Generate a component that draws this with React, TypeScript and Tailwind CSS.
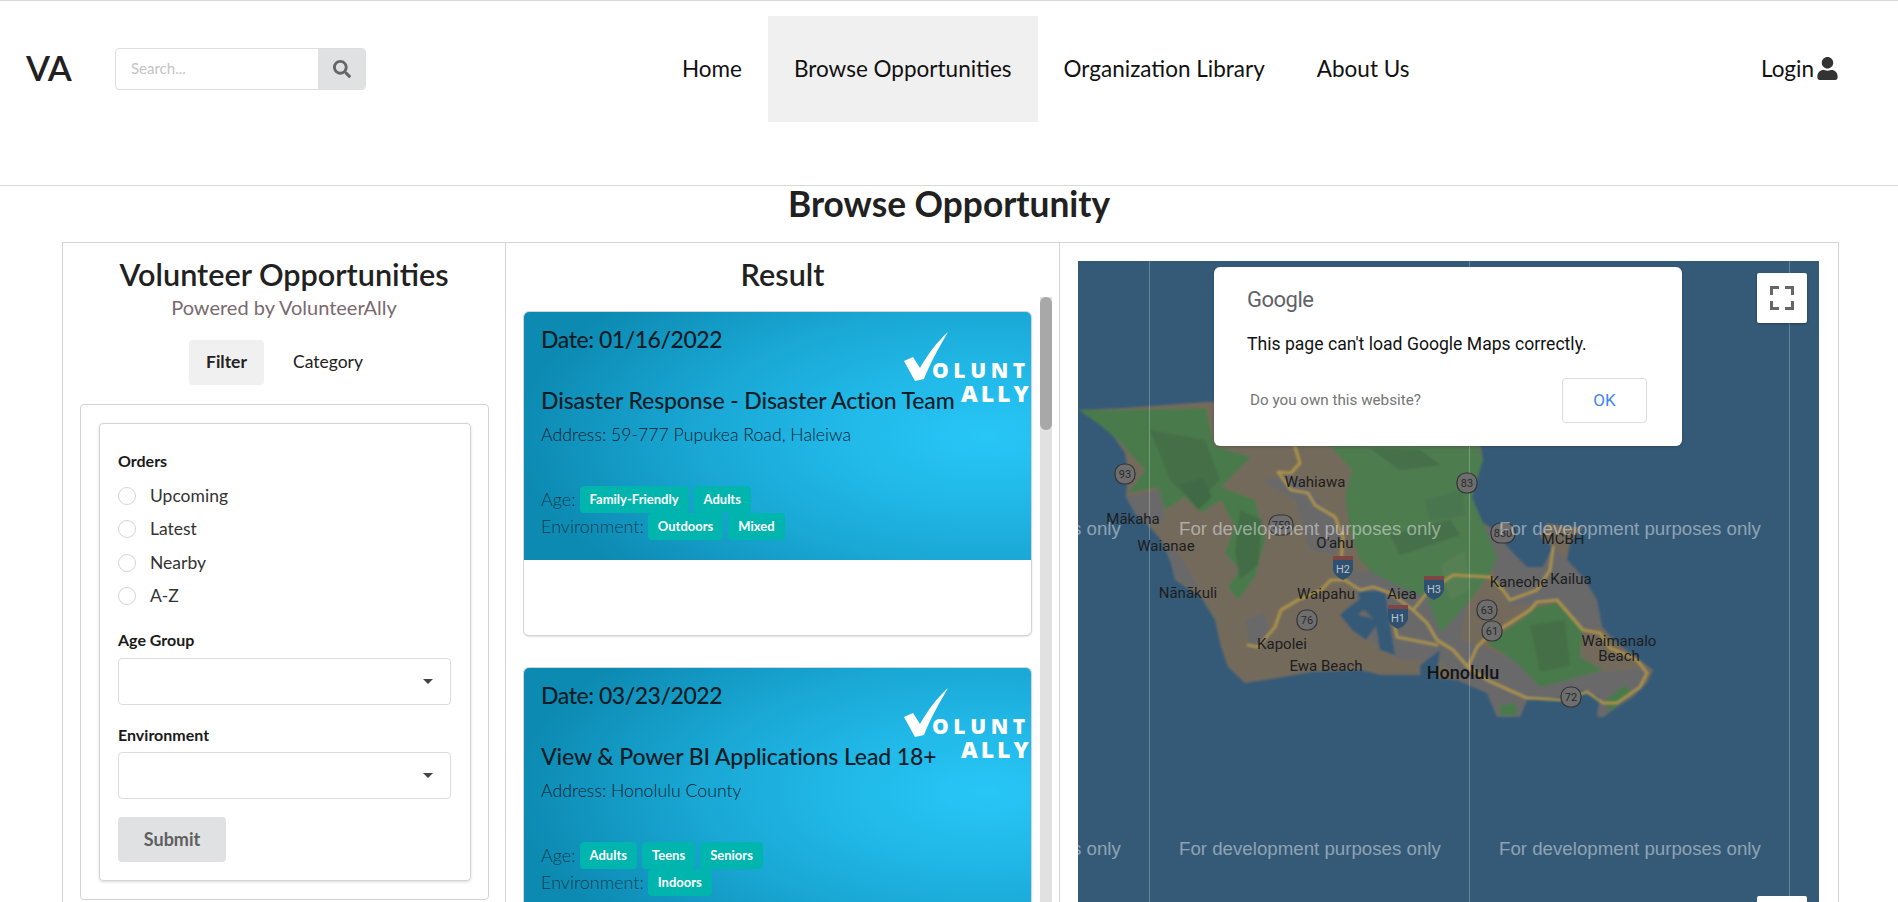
import { FaSearch, FaUser } from "react-icons/fa";

type Opportunity = {
  date: string;
  title: string;
  address: string;
  age: string[];
  environment: string[];
};

const opportunities: Opportunity[] = [
  {
    date: "01/16/2022",
    title: "Disaster Response - Disaster Action Team",
    address: "59-777 Pupukea Road, Haleiwa",
    age: ["Family-Friendly", "Adults"],
    environment: ["Outdoors", "Mixed"],
  },
  {
    date: "03/23/2022",
    title: "View & Power BI Applications Lead 18+",
    address: "Honolulu County",
    age: ["Adults", "Teens", "Seniors"],
    environment: ["Indoors"],
  },
];

const navItems = ["Home", "Browse Opportunities", "Organization Library", "About Us"];
const orders = ["Upcoming", "Latest", "Nearby", "A-Z"];

function Tag({ label }: { label: string }) {
  return (
    <span className="flex h-[27px] items-center rounded-[4px] bg-[#00b5ad] px-[10px] text-[13px] font-bold text-white">
      {label}
    </span>
  );
}

function Logo() {
  return (
    <svg viewBox="0 0 131 72" className="absolute right-0 top-[20px] h-[72px] w-[131px]">
      <path d="M4 29 L13 25 L20 36 C28 22 37 10 48 0 C40 14 30 31 24 47 L15 49 Z" fill="#fff" />
      <text x="32" y="46" fill="#fff" fontSize="21" fontWeight="800" letterSpacing="4.6" fontFamily="Open Sans, sans-serif">
        OLUNT
      </text>
      <text x="61" y="70" fill="#fff" fontSize="23" fontWeight="800" letterSpacing="3" fontFamily="Open Sans, sans-serif">
        ALLY
      </text>
    </svg>
  );
}

function ResultCard({ item }: { item: Opportunity }) {
  return (
    <div className="mb-[31px] h-[325px] w-[509px] shrink-0 overflow-hidden rounded-[6px] border border-[#d4d4d5] bg-white shadow-[0_1px_2px_rgba(0,0,0,0.12)]">
      <div className="relative h-[248px] bg-[radial-gradient(ellipse_470px_210px_at_91%_50%,#27c6f7_0%,#21b9e8_30%,#1aa8d5_60%,#0c8ab2_100%)] pl-[17px] pt-[12px]">
        <Logo />
        <p className="text-[23px] leading-[30px] font-medium tracking-[-0.45px] text-[#0a1c26]">Date: {item.date}</p>
        <p className="relative mt-[31px] text-[23px] leading-[30px] font-medium tracking-[-0.12px] text-[#0a1c26]">{item.title}</p>
        <p className="mt-[8px] text-[17.7px] leading-[24px] font-light text-[#0a2230]">Address: {item.address}</p>
        <div className="mt-[39px] flex items-center gap-[5px] text-[18px] font-light text-black/60">
          <span className="mr-[-1px]">Age:</span>
          {item.age.map((a) => (
            <Tag key={a} label={a} />
          ))}
        </div>
        <div className="flex items-center gap-[5px] text-[18px] font-light text-black/60">
          <span className="mr-[-1px]">Environment:</span>
          {item.environment.map((e) => (
            <Tag key={e} label={e} />
          ))}
        </div>
      </div>
    </div>
  );
}

function SelectBox() {
  return (
    <div className="flex h-[47px] w-[333px] items-center justify-end rounded-[4px] border border-[#dcdcdd] pr-[17px]">
      <svg viewBox="0 0 10 5" className="h-[5px] w-[10px]">
        <path d="M0 0 H10 L5 5 Z" fill="#444" />
      </svg>
    </div>
  );
}

function Shield({ x, y, label, w = 20 }: { x: number; y: number; label: string; w?: number }) {
  return (
    <g>
      <rect x={x - w / 2} y={y - 10} width={w} height={20} rx={9} fill="#6e6e6e" stroke="#333" strokeWidth="1.2" />
      <text x={x} y={y + 4} textAnchor="middle" fontSize="11" fill="#2a2a2a" fontFamily="Roboto, sans-serif">
        {label}
      </text>
    </g>
  );
}

function Interstate({ x, y, label }: { x: number; y: number; label: string }) {
  return (
    <g>
      <path d={`M${x - 10} ${y - 9} H${x + 10} V${y + 4} Q${x + 8} ${y + 11} ${x} ${y + 14} Q${x - 8} ${y + 11} ${x - 10} ${y + 4} Z`} fill="#2f506f" />
      <rect x={x - 10} y={y - 10} width={20} height={4} fill="#7f4444" />
      <text x={x} y={y + 7} textAnchor="middle" fontSize="11" fill="#b9c4cf" fontFamily="Roboto, sans-serif">
        {label}
      </text>
    </g>
  );
}

const towns: [string, number, number][] = [
  ["Mākaha", 1133, 524],
  ["Waianae", 1166, 551],
  ["Nānākuli", 1188, 598],
  ["Wahiawa", 1315, 487],
  ["O'ahu", 1335, 548],
  ["Waipahu", 1326, 599],
  ["Aiea", 1402, 599],
  ["Kapolei", 1282, 649],
  ["Ewa Beach", 1326, 671],
  ["Kaneohe", 1519, 587],
  ["Kailua", 1571, 584],
  ["MCBH", 1563, 544],
  ["Waimanalo", 1619, 646],
  ["Beach", 1619, 661],
];

const watermarks: [number, number][] = [
  [859, 535],
  [1179, 535],
  [1499, 535],
  [859, 855],
  [1179, 855],
  [1499, 855],
];

function MapArt() {
  return (
    <svg viewBox="1078 261 741 660" className="block h-full w-full">
      <defs>
        <filter id="soft">
          <feGaussianBlur stdDeviation="0.8" />
        </filter>
      </defs>
      <rect x="1078" y="261" width="741" height="660" fill="#355a78" />
      <g filter="url(#soft)">
        {/* island */}
        <path
          d="M1079 410 L1124 408 L1206 402 L1300 400 L1470 440 L1481 447 L1483 460 L1478 473 L1472 497 L1477 510 L1483 523 L1490 527 L1513 553 L1527 567 L1543 567 L1553 547 L1540 537 L1547 523 L1567 527 L1583 527 L1570 543 L1567 560 L1583 577 L1597 600 L1602 627 L1617 643 L1640 660 L1653 670 L1647 683 L1633 697 L1617 707 L1603 717 L1597 717 L1600 697 L1583 690 L1560 697 L1527 700 L1520 717 L1497 717 L1487 693 L1457 680 L1427 677 L1420 675 L1380 675 L1361 670 L1311 672 L1278 678 L1245 683 L1228 667 L1221 647 L1215 620 L1201 597 L1175 580 L1171 563 L1161 540 L1150 527 L1136 515 L1126 497 L1128 473 L1125 453 L1109 430 Z"
          fill="#736b5b"
        />
        {/* urban */}
        <path d="M1126 497 L1160 490 L1165 520 L1150 527 L1136 515 Z" fill="#69696a" />
        <path d="M1161 540 L1180 555 L1200 590 L1175 580 L1171 563 Z" fill="#69696a" />
        <path d="M1245 620 L1265 612 L1270 640 L1250 650 Z" fill="#69696a" />
        <path d="M1262 480 L1290 475 L1310 490 L1345 530 L1335 555 L1310 550 L1295 500 Z" fill="#69696a" />
        <path d="M1345 572 L1400 570 L1440 600 L1470 590 L1460 640 L1490 650 L1530 665 L1580 660 L1600 672 L1650 668 L1640 690 L1603 717 L1597 717 L1600 697 L1583 690 L1560 697 L1527 700 L1520 717 L1497 717 L1487 693 L1457 680 L1440 660 L1400 660 L1370 640 L1360 600 Z" fill="#69696a" />
        <path d="M1490 527 L1513 553 L1527 567 L1543 567 L1553 547 L1567 560 L1583 577 L1597 600 L1602 627 L1583 630 L1557 600 L1530 605 L1510 605 L1495 575 L1480 530 Z" fill="#69696a" />
        {/* mountains */}
        <path d="M1079 410 L1124 410 L1206 408 L1214 446 L1251 457 L1221 487 L1255 500 L1265 540 L1255 577 L1238 600 L1228 587 L1240 570 L1225 553 L1235 527 L1221 500 L1201 513 L1185 497 L1165 510 L1158 487 L1128 493 L1145 470 L1121 443 L1100 425 Z" fill="#4a7a4c" />
        <path d="M1150 430 L1205 440 L1220 480 L1195 505 L1170 480 Z" fill="#446f47" />
        <path d="M1180 485 L1202 478 L1212 497 L1198 510 Z" fill="#3f6a44" />
        <path d="M1240 510 L1262 520 L1258 565 L1240 580 L1235 550 Z" fill="#436d47" />
        <path d="M1330 446 L1478 446 L1483 460 L1472 497 L1483 523 L1497 557 L1490 573 L1473 597 L1453 620 L1440 633 L1427 597 L1407 590 L1373 573 L1360 560 L1350 530 L1345 497 L1352 470 Z" fill="#4d7b4f" />
        <path d="M1370 448 L1420 450 L1440 465 L1400 470 Z" fill="#456f49" />
        <path d="M1390 535 L1450 520 L1460 535 L1400 555 Z" fill="#456f49" />
        <path d="M1440 565 L1465 550 L1470 590 L1450 600 Z" fill="#567f53" />
        <path d="M1425 500 L1462 490 L1465 515 L1430 520 Z" fill="#487650" />
        <path d="M1487 643 L1517 623 L1537 607 L1557 603 L1583 630 L1580 657 L1603 670 L1557 683 L1540 687 L1517 663 Z" fill="#4a7a4c" />
        <path d="M1530 625 L1565 620 L1570 665 L1540 672 Z" fill="#446f47" />
        <path d="M1500 705 L1515 703 L1518 715 L1500 716 Z" fill="#4a7a4c" />
        <path d="M1605 700 L1625 685 L1632 692 L1610 712 Z" fill="#4a7a4c" />
        {/* harbours */}
        <path d="M1345 610 L1365 595 L1375 600 L1358 615 L1380 620 L1366 640 L1352 630 L1340 615 Z" fill="#355a78" />
        <path d="M1358 592 L1385 590 L1390 625 L1395 655 L1380 650 L1375 620 L1362 608 Z" fill="#355a78" />
        <path d="M1420 665 L1440 650 L1436 680 L1420 680 Z" fill="#355a78" />
        {/* roads */}
        <g fill="none" stroke="#ad9447" strokeWidth="2.7" strokeLinejoin="round" strokeLinecap="round">
          <path d="M1295 447 L1300 463 L1291 473 L1278 472 L1291 490 L1308 493 L1315 505 L1335 517 L1343 537 L1341 563" />
          <path d="M1248 645 L1258 647 L1275 627 L1281 610 L1298 600 L1321 590 L1331 580 L1345 580 L1360 590 L1373 587 L1390 593 L1413 610 L1427 623 L1437 640 L1453 650 L1468 667" />
          <path d="M1393 617 L1397 637 L1437 645" />
          <path d="M1413 610 L1427 593 L1453 575 L1490 577 L1503 590 L1510 600 L1537 590 L1550 570 L1553 547" />
          <path d="M1468 667 L1477 647 L1487 637 L1510 623 L1530 610 L1537 602 L1557 600 L1583 630 L1600 633 L1610 648 L1637 660 L1647 673 L1640 687 L1617 703 L1603 703 L1587 692 L1560 700 L1527 698 L1487 680 L1468 667" />
        </g>
      </g>
      {/* tile seams */}
      <g stroke="#ffffff" strokeOpacity="0.25" strokeWidth="1">
        <line x1="1149.5" y1="261" x2="1149.5" y2="921" />
        <line x1="1469.5" y1="261" x2="1469.5" y2="921" />
        <line x1="1789.5" y1="261" x2="1789.5" y2="921" />
      </g>
      {/* labels */}
      <Shield x={1125} y={474} label="93" />
      <Shield x={1281} y={525} label="750" w={24} />
      <Shield x={1307} y={620} label="76" />
      <Shield x={1467} y={483} label="83" />
      <Shield x={1503} y={533} label="830" w={24} />
      <Shield x={1487} y={610} label="63" />
      <Shield x={1492} y={631} label="61" />
      <Shield x={1571} y={697} label="72" />
      <Interstate x={1343} y={566} label="H2" />
      <Interstate x={1434} y={586} label="H3" />
      <Interstate x={1398} y={615} label="H1" />
      <g fontFamily="Roboto, sans-serif" fontSize="15" fill="#1d1d1d" textAnchor="middle">
        {towns.map(([name, x, y]) => (
          <text key={name} x={x} y={y}>
            {name}
          </text>
        ))}
        <text x="1463" y="679" fontSize="18" fontWeight="500" fill="#141414">
          Honolulu
        </text>
      </g>
      <g fontFamily="Liberation Sans, sans-serif" fontSize="18.7" fill="#ffffff" fillOpacity="0.45">
        {watermarks.map(([x, y]) => (
          <text key={`${x}-${y}`} x={x} y={y}>
            For development purposes only
          </text>
        ))}
      </g>
    </svg>
  );
}

export default function App() {
  return (
    <div className="h-screen overflow-hidden bg-white text-[#212121] [font-family:Lato,sans-serif]">
      {/* Header */}
      <header className="flex h-[186px] border-y border-[#d9d9d9]">
        <div className="flex h-[135px] items-center">
          <span className="ml-[26px] w-[89px] pb-[2px] text-[35px] leading-none font-semibold tracking-[-0.3px]">VA</span>
          <div className="flex h-[42px] w-[251px] overflow-hidden rounded-[4px] border border-[#dedede]">
            <span className="flex flex-1 items-center pl-[15px] text-[15px] text-[#c4c4c4]">Search...</span>
            <span className="flex w-[47px] items-center justify-center bg-[#e0e1e2]">
              <FaSearch className="text-[18px] text-[#666]" />
            </span>
          </div>
        </div>
        <nav className="ml-[290px] flex h-[106px] mt-[15px] items-center text-[22.5px]">
          {navItems.map((label) => (
            <a
              key={label}
              className={
                label === "Browse Opportunities"
                  ? "flex h-full items-center bg-[#f0f0f0] px-[26px] pb-[1px] text-[#111]"
                  : "flex h-full items-center px-[26px] pb-[1px] text-[#111]"
              }
            >
              {label}
            </a>
          ))}
        </nav>
        <div className="ml-auto mr-[59px] flex h-[135px] items-center text-[22.5px] text-[#111]">
          Login
          <FaUser className="ml-[2px] text-[23px] text-[#333]" />
        </div>
      </header>

      <h1 className="mb-[20px] text-center text-[35.3px] leading-[36px] font-bold">Browse Opportunity</h1>

      {/* Main panel */}
      <div className="ml-[62px] flex h-[700px] w-[1777px] border border-[#d4d4d5]">
        {/* Filters */}
        <aside className="w-[443px] shrink-0 border-r border-[#d4d4d5] px-[17px] pt-[13px]">
          <h2 className="text-center text-[30.6px] leading-[38px] font-semibold">Volunteer Opportunities</h2>
          <p className="mt-[1px] text-center text-[20px] leading-[24px] text-[#7a6a6e]">Powered by VolunteerAlly</p>
          <div className="ml-[109px] mt-[21px] flex text-[17.5px] text-[#222]">
            <span className="flex h-[45px] w-[75px] items-center justify-center rounded-[4px] bg-[#f0f0f0] font-bold">Filter</span>
            <span className="ml-[3px] flex h-[45px] w-[122px] items-center justify-center">Category</span>
          </div>
          <div className="mt-[19px] h-[496px] w-[409px] rounded-[4px] border border-[#d4d4d5] px-[18px] pt-[18px]">
            <div className="h-[458px] w-[372px] rounded-[4px] border border-[#d4d4d5] px-[18px] pt-[27px] shadow-[0_1px_3px_rgba(0,0,0,0.15)]">
              <p className="text-[16px] leading-[20px] font-bold text-[#1a1a1a]">Orders</p>
              <div className="mt-[8px] flex flex-col">
                {orders.map((o) => (
                  <label key={o} className="flex h-[33.5px] items-center text-[17.5px] text-[#333]">
                    <span className="mr-[14px] h-[18px] w-[18px] rounded-full border border-[#d4d4d5]" />
                    {o}
                  </label>
                ))}
              </div>
              <p className="mb-[8px] mt-[17px] text-[16px] leading-[20px] font-bold text-[#1a1a1a]">Age Group</p>
              <SelectBox />
              <p className="mb-[7px] mt-[20px] text-[16px] leading-[20px] font-bold text-[#1a1a1a]">Environment</p>
              <SelectBox />
              <button className="mt-[18px] flex h-[45px] w-[108px] items-center justify-center rounded-[4px] bg-[#e0e1e2] text-[18px] font-bold text-[#5f5f5f]">
                Submit
              </button>
            </div>
          </div>
        </aside>

        {/* Results */}
        <section className="w-[554px] shrink-0 border-r border-[#d4d4d5] pt-[13px]">
          <h2 className="text-center text-[30.6px] leading-[38px] font-semibold">Result</h2>
          <div className="flex h-[620px] pl-[17px] pt-[3px]">
            <div className="flex w-[517px] flex-col overflow-hidden pt-[14px]">
              {opportunities.map((item) => (
                <ResultCard key={item.date} item={item} />
              ))}
            </div>
            <div className="h-full w-[12px] bg-[#e1e1e1]">
              <div className="h-[133px] rounded-full bg-[#a8a8a8]" />
            </div>
          </div>
        </section>

        {/* Map */}
        <section className="flex-1 pl-[18px] pt-[18px]">
          <div className="relative h-[660px] w-[741px] overflow-hidden">
            <MapArt />
            <div className="absolute left-[136px] top-[6px] flex h-[179px] w-[468px] flex-col rounded-[6px] bg-white pl-[33px] pr-[35px] [font-family:Roboto,sans-serif] shadow-[0_1px_3px_rgba(0,0,0,0.2)]">
              <span className="mt-[18px] text-[22px] leading-[30px] tracking-[-0.5px] text-[#5f6368]">Google</span>
              <p className="mt-[18px] text-[17.6px] leading-[22px] text-[#111]">This page can't load Google Maps correctly.</p>
              <div className="mt-[23px] flex items-center justify-between pl-[3px]">
                <span className="text-[15.2px] text-[#757575]">Do you own this website?</span>
                <span className="flex h-[45px] w-[85px] items-center justify-center rounded-[4px] border border-[#dadce0] text-[17px] text-[#4285f4]">
                  OK
                </span>
              </div>
            </div>
            <div className="absolute right-[12px] top-[12px] flex h-[50px] w-[50px] items-center justify-center rounded-[2px] bg-white shadow-[0_1px_3px_rgba(0,0,0,0.3)]">
              <svg viewBox="0 0 24 24" className="h-[24px] w-[24px]" fill="none" stroke="#666" strokeWidth="3">
                <path d="M1.5 9 V1.5 H9 M15 1.5 H22.5 V9 M22.5 15 V22.5 H15 M9 22.5 H1.5 V15" />
              </svg>
            </div>
            <div className="absolute right-[12px] top-[635px] h-[50px] w-[50px] rounded-[2px] bg-white" />
          </div>
        </section>
      </div>
    </div>
  );
}
